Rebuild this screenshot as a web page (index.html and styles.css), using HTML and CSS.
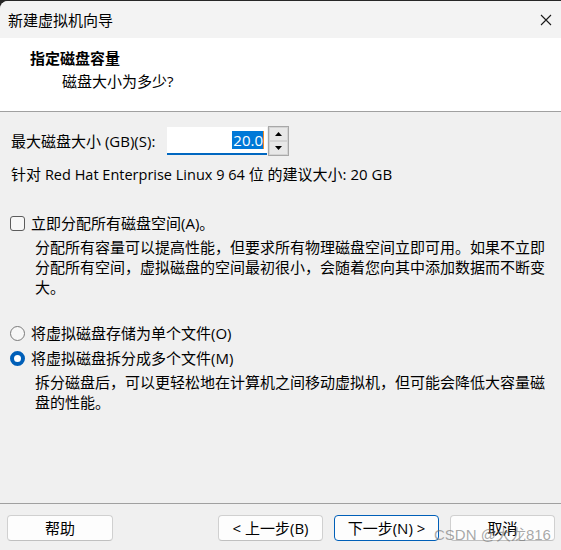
FILE: index.html
```html
<!DOCTYPE html>
<html lang="zh-CN">
<head>
<meta charset="utf-8">
<title>新建虚拟机向导</title>
<link rel="stylesheet" href="styles.css">
</head>
<body>
<div class="window">
  <div class="titlebar">
    <span class="title">新建虚拟机向导</span>
    <svg class="close" width="12" height="12" viewBox="0 0 12 12"><path d="M1 1 L11 11 M11 1 L1 11" stroke="#1a1a1a" stroke-width="1.1" fill="none"/></svg>
  </div>
  <div class="header">
    <div class="h-title">指定磁盘容量</div>
    <div class="h-sub">磁盘大小为多少?</div>
  </div>
  <div class="content">
    <div class="size-row">
      <span class="size-label">最大磁盘大小 (GB)(S):</span>
      <div class="input"><span class="sel">20.0</span><span class="caret"></span></div>
      <div class="spinner">
        <div class="spin-btn"><svg width="7" height="4" viewBox="0 0 7 4"><path d="M0 4 L3.5 0 L7 4 Z" fill="#000"/></svg></div>
        <div class="spin-btn"><svg width="7" height="4" viewBox="0 0 7 4"><path d="M0 0 L3.5 4 L7 0 Z" fill="#000"/></svg></div>
      </div>
    </div>
    <div class="recommend">针对 <span class="en">Red Hat Enterprise Linux 9 64</span> 位 的建议大小: 20 GB</div>
    <div class="option opt-check"><span class="checkbox"></span><span>立即分配所有磁盘空间(A)。</span></div>
    <div class="desc">分配所有容量可以提高性能，但要求所有物理磁盘空间立即可用。如果不立即<br>分配所有空间，虚拟磁盘的空间最初很小，会随着您向其中添加数据而不断变<br>大。</div>
    <div class="option opt-radio1"><span class="radio"></span><span>将虚拟磁盘存储为单个文件(O)</span></div>
    <div class="option opt-radio2"><span class="radio checked"></span><span>将虚拟磁盘拆分成多个文件(M)</span></div>
    <div class="desc">拆分磁盘后，可以更轻松地在计算机之间移动虚拟机，但可能会降低大容量磁<br>盘的性能。</div>
  </div>
  <div class="footer">
    <button class="btn btn-help">帮助</button>
    <button class="btn">&lt; 上一步(B)</button>
    <button class="btn btn-primary">下一步(N) &gt;</button>
    <button class="btn">取消</button>
  </div>
  <div class="watermark">CSDN @大龙816</div>
</div>
</body>
</html>
```

FILE: styles.css
```css
* { box-sizing: border-box; }
html, body { margin: 0; padding: 0; }
body {
  background: #262626;
  width: 561px;
  height: 550px;
  overflow: hidden;
  font-family: "Open Sans", "Noto Sans CJK SC", sans-serif;
  font-size: 15px;
  line-height: 20px;
  color: #000;
}
.window {
  position: relative;
  margin-top: 1px;
  height: 549px;
  background: #f0f0f0;
  border-top-left-radius: 8px;
  overflow: hidden;
  display: flex;
  flex-direction: column;
}
.titlebar {
  height: 37px;
  background: #f3f3f3;
  display: flex;
  align-items: center;
  justify-content: space-between;
  padding: 0 9px 0 8px;
  flex: none;
}
.close { display: block; }
.header {
  background: #fff;
  height: 74px;
  border-bottom: 1px solid #a0a0a0;
  padding-top: 10px;
  flex: none;
}
.h-title {
  font-weight: bold;
  padding-left: 30px;
}
.h-sub {
  margin-top: 3px;
  padding-left: 62px;
}
.content {
  flex: 1;
  padding-left: 10px;
  white-space: nowrap;
}
.size-row {
  margin-top: 14px;
  height: 30px;
  display: flex;
  align-items: center;
  padding-left: 1px;
}
.size-label { width: 156px; }
.input {
  width: 100px;
  height: 28px;
  background: #fff;
  border-bottom: 2px solid #0067c0;
  display: flex;
  align-items: center;
  justify-content: flex-end;
  padding-right: 3px;
}
.sel {
  background: #0078d7;
  color: #fff;
  line-height: 18px;
  padding: 0 0 0 1px;
}
.caret {
  width: 1px;
  height: 18px;
  background: #f08a24;
}
.spinner {
  margin-left: 1px;
  width: 21px;
  height: 30px;
  border: 1px solid #a8a8a8;
  display: flex;
  flex-direction: column;
  background: #f0f0f0;
}
.spin-btn {
  flex: 1;
  border: 1px solid #d4d4d4;
  background: #e8e8e8;
  display: flex;
  align-items: center;
  justify-content: center;
}
.spin-btn svg { display: block; }
.recommend {
  margin-top: 8px;
  padding-left: 1px;
}
.en { font-size: 14.5px; }
.option {
  display: flex;
  align-items: center;
  height: 20px;
}
.opt-check { margin-top: 28px; }
.opt-radio1 { margin-top: 26px; }
.opt-radio2 { margin-top: 5px; }
.checkbox {
  width: 15px;
  height: 15px;
  border: 1px solid #5c5c5c;
  border-radius: 3px;
  background: #f7f7f7;
  margin-right: 6px;
  flex: none;
}
.radio {
  width: 15px;
  height: 15px;
  border: 1px solid #7a7a7a;
  border-radius: 50%;
  background: #f7f7f7;
  margin-right: 6px;
  flex: none;
}
.radio.checked {
  border: 4.5px solid #005fb8;
  background: #fff;
}
.desc {
  margin-top: 4px;
  padding-left: 25px;
}
.footer {
  flex: none;
  height: 47px;
  border-top: 1px solid #a0a0a0;
  padding: 11px 6px 0 7px;
  display: flex;
  gap: 11px;
}
.btn {
  font: inherit;
  font-size: 15px;
  line-height: 20px;
  color: #000;
  width: 105px;
  height: 26px;
  padding: 0;
  background: #fdfdfd;
  border: 1px solid #d0d0d0;
  border-bottom-color: #c0c0c0;
  border-radius: 4px;
}
.btn-help { width: 106px; margin-right: auto; }
.btn-primary { border-color: #005fb8; }
.watermark {
  position: absolute;
  left: 434px;
  top: 524px;
  font-family: "Liberation Sans", "Noto Sans CJK SC", sans-serif;
  font-size: 15px;
  line-height: 20px;
  color: rgba(110, 110, 110, 0.6);
  white-space: nowrap;
}
```
